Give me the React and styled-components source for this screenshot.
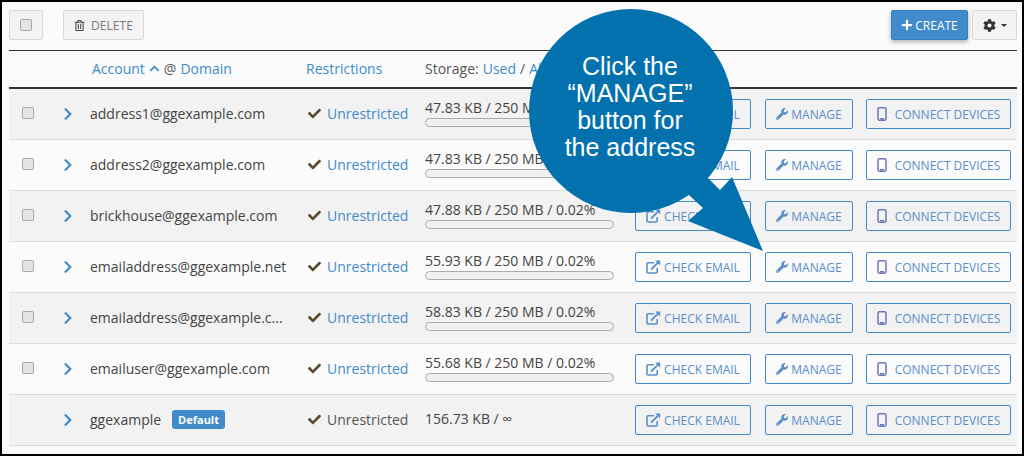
import styled, { createGlobalStyle } from "styled-components";
import { FaCheck, FaChevronRight, FaChevronUp, FaCog, FaPlus, FaRegTrashAlt, FaWrench } from "react-icons/fa";

const GlobalStyle = createGlobalStyle`
  html, body { margin: 0; padding: 0; }
  body { font-family: "Open Sans", sans-serif; background: #000; }
`;

const Frame = styled.div`
  position: relative;
  width: 1024px;
  height: 456px;
  box-sizing: border-box;
  border: 2px solid #000;
  background: #fbfbfb;
  padding: 8px 5px 0 7px;
  overflow: hidden;
`;

const Toolbar = styled.div`
  display: flex;
  align-items: center;
  height: 30px;
  padding-bottom: 10px;
  border-bottom: 1px solid #333;
`;

const GhostButton = styled.div`
  display: flex;
  align-items: center;
  justify-content: center;
  box-sizing: border-box;
  height: 30px;
  width: ${(p) => p.$w}px;
  margin-right: ${(p) => p.$mr || 0}px;
  gap: ${(p) => p.$gap || 5}px;
  border: 1px solid #e0d4d9;
  border-radius: 2px;
  background: #f4f3f3;
  color: #7d7780;
  font-size: 12px;
  letter-spacing: 0.1px;
`;

const CreateButton = styled.div`
  display: flex;
  align-items: center;
  justify-content: center;
  box-sizing: border-box;
  margin-left: auto;
  margin-right: 4px;
  width: 77px;
  height: 30px;
  gap: 2px;
  background: #428bca;
  border: 1px solid #357ebd;
  border-radius: 2px;
  box-shadow: 0 2px 5px rgba(0, 0, 0, 0.3);
  color: #fff;
  font-size: 12px;
`;

const Caret = styled.span`
  width: 0;
  height: 0;
  border-left: 3px solid transparent;
  border-right: 3px solid transparent;
  border-top: 3px solid #333;
`;

const Box = styled.span`
  display: block;
  box-sizing: border-box;
  width: 12px;
  height: 12px;
  border: 1px solid #aaa;
  border-radius: 2px;
  background: #e4e4e4;
`;

const columns = "36px 45px 218px 117px 210px 130px 101px 151px";

const HeaderRow = styled.div`
  display: grid;
  grid-template-columns: ${columns};
  align-items: center;
  box-sizing: border-box;
  height: 38px;
  padding-bottom: 2px;
  border-bottom: 2px solid #333;
  font-size: 14px;
  color: #555;
`;

const HeaderCell = styled.div`
  grid-column: ${(p) => p.$col};
  white-space: nowrap;
  display: flex;
  align-items: center;
  gap: 4px;
  margin-left: ${(p) => p.$ml || 0}px;
`;

const SortLink = styled.span`
  color: #428bca;
`;

const Row = styled.div`
  display: grid;
  grid-template-columns: ${columns};
  align-items: center;
  box-sizing: border-box;
  height: 51px;
  border-bottom: 1px solid #ddd;
  background: ${(p) => (p.$odd ? "#f2f2f2" : "#fbfbfb")};
  color: #444;
  font-size: 14px;
`;

const BoxCell = styled.div`
  padding: 0 0 2px 13px;
`;

const Chevron = styled.div`
  display: flex;
  padding-left: 16px;
  color: #428bca;
  font-size: 14px;
`;

const Name = styled.div`
  display: flex;
  align-items: center;
  gap: 11px;
  padding-bottom: 2px;
  white-space: nowrap;
`;

const Badge = styled.span`
  background: #428bca;
  color: #fff;
  border-radius: 3px;
  padding: 2px 6px;
  font-size: 11px;
  font-weight: 700;
  line-height: 15px;
`;

const Status = styled.div`
  display: flex;
  align-items: center;
  gap: 6px;
  padding-bottom: 2px;
  color: ${(p) => (p.$plain ? "#555" : "#428bca")};
  white-space: nowrap;
  svg { color: #5c4a32; font-size: 13px; }
`;

const Storage = styled.div`
  display: flex;
  flex-direction: column;
  gap: 1px;
  width: 189px;
  padding-bottom: 2px;
  font-size: 14px;
  line-height: 18px;
  white-space: nowrap;
`;

const Bar = styled.div`
  height: 9px;
  box-sizing: border-box;
  border: 1px solid #aaa;
  border-radius: 5px;
  background: #f0f0f0;
`;

const Action = styled.div`
  display: flex;
  align-items: center;
  justify-content: center;
  box-sizing: border-box;
  width: ${(p) => p.$w}px;
  height: 30px;
  gap: ${(p) => p.$gap || 5}px;
  border: 1px solid #428bca;
  border-radius: 2px;
  color: #5a8fcb;
  font-size: 12px;
  white-space: nowrap;
`;

const Callout = styled.svg`
  position: absolute;
  left: -2px;
  top: -2px;
  width: 1024px;
  height: 456px;
`;

const CalloutText = styled.div`
  position: absolute;
  left: 526px;
  top: 51px;
  width: 204px;
  text-align: center;
  font-family: "Liberation Sans", Arial, sans-serif;
  font-size: 25px;
  line-height: 27px;
  color: #fff;
`;

const LinkSquareIcon = () => (
  <svg width="15" height="14" viewBox="0 0 15 14" fill="none" stroke="#5a8fcb" strokeWidth="1.6">
    <path d="M8 2.8H2.2a1.2 1.2 0 0 0-1.2 1.2v7.8a1.2 1.2 0 0 0 1.2 1.2H10a1.2 1.2 0 0 0 1.2-1.2V8" />
    <path d="M5 9.6 13 1.6" strokeWidth="2" />
    <path d="M9.2 0.6H14.2V5.6Z" fill="#5a8fcb" stroke="none" />
  </svg>
);

const PhoneIcon = () => (
  <svg width="10" height="14" viewBox="0 0 10 14" fill="none">
    <rect x="1" y="0.8" width="8" height="12.4" rx="1.4" stroke="#6b78b8" strokeWidth="1.5" />
    <path d="M3 11.8h4" stroke="#6b78b8" strokeWidth="1.6" />
  </svg>
);

const rows = [
  { name: "address1@ggexample.com", used: "47.83 KB / 250 MB / 0.02%" },
  { name: "address2@ggexample.com", used: "47.83 KB / 250 MB / 0.02%" },
  { name: "brickhouse@ggexample.com", used: "47.88 KB / 250 MB / 0.02%" },
  { name: "emailaddress@ggexample.net", used: "55.93 KB / 250 MB / 0.02%" },
  { name: "emailaddress@ggexample.c...", used: "58.83 KB / 250 MB / 0.02%" },
  { name: "emailuser@ggexample.com", used: "55.68 KB / 250 MB / 0.02%" },
  { name: "ggexample", used: "156.73 KB / ∞", main: true },
];

export default function App() {
  return (
    <Frame>
      <GlobalStyle />
      <Toolbar>
        <GhostButton $w={34} $mr={20}>
          <Box />
        </GhostButton>
        <GhostButton $w={81} $gap={6}>
          <FaRegTrashAlt size={11} color="#443" />
          DELETE
        </GhostButton>
        <CreateButton>
          <FaPlus size={12} />
          CREATE
        </CreateButton>
        <GhostButton $w={45}>
          <FaCog size={13} color="#333" />
          <Caret />
        </GhostButton>
      </Toolbar>
      <HeaderRow>
        <HeaderCell $col="3" $ml={2}>
          <SortLink>Account</SortLink>
          <FaChevronUp size={11} color="#428bca" />
          @ <SortLink>Domain</SortLink>
        </HeaderCell>
        <HeaderCell $col="4" $ml={-2}>
          <SortLink>Restrictions</SortLink>
        </HeaderCell>
        <HeaderCell $col="5">
          Storage: <SortLink>Used</SortLink> / <SortLink>Allocated</SortLink>
        </HeaderCell>
      </HeaderRow>
      {rows.map((r, i) => (
        <Row key={r.name} $odd={i % 2 === 0}>
          <BoxCell>{!r.main && <Box />}</BoxCell>
          <Chevron>
            <FaChevronRight />
          </Chevron>
          <Name>
            {r.name}
            {r.main && <Badge>Default</Badge>}
          </Name>
          <Status $plain={r.main}>
            <FaCheck />
            Unrestricted
          </Status>
          <Storage>
            {r.used}
            {!r.main && <Bar />}
          </Storage>
          <Action $w={116} $gap={3}>
            <LinkSquareIcon />
            CHECK EMAIL
          </Action>
          <Action $w={88} $gap={3}>
            <FaWrench size={12} />
            MANAGE
          </Action>
          <Action $w={145} $gap={8}>
            <PhoneIcon />
            CONNECT DEVICES
          </Action>
        </Row>
      ))}
      <Callout viewBox="0 0 1024 456">
        <circle cx="631" cy="111" r="102" fill="#0271ad" />
        <polygon points="660,150 708,178 720,190 732,177 763,251 688,221 703,208 689,195" fill="#0271ad" />
      </Callout>
      <CalloutText>
        Click the
        <br />
        “MANAGE”
        <br />
        button for
        <br />
        the address
      </CalloutText>
    </Frame>
  );
}
